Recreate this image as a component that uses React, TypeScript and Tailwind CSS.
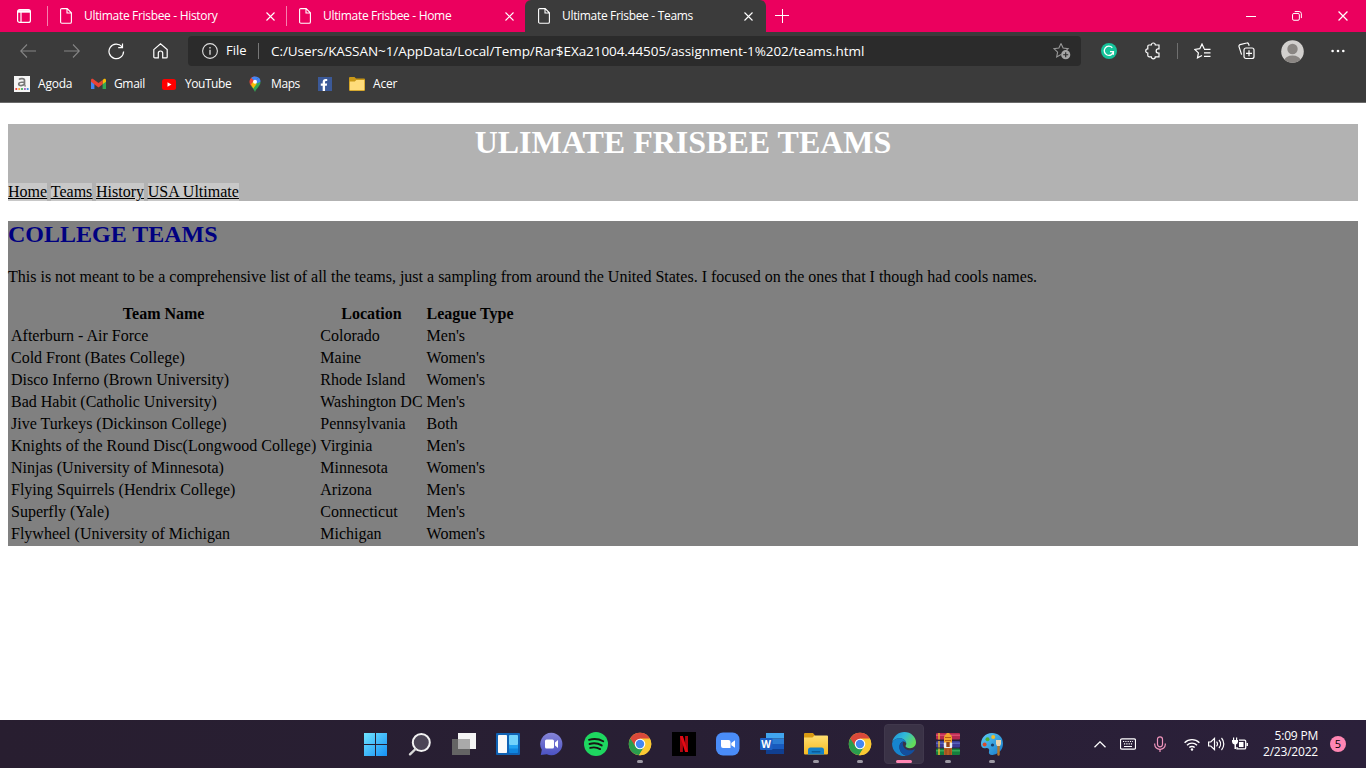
import type { ReactNode } from "react";
import { FaFacebookF } from "react-icons/fa";

const teams = [
  ["Afterburn - Air Force", "Colorado", "Men's"],
  ["Cold Front (Bates College)", "Maine", "Women's"],
  ["Disco Inferno (Brown University)", "Rhode Island", "Women's"],
  ["Bad Habit (Catholic University)", "Washington DC", "Men's"],
  ["Jive Turkeys (Dickinson College)", "Pennsylvania", "Both"],
  ["Knights of the Round Disc(Longwood College)", "Virginia", "Men's"],
  ["Ninjas (University of Minnesota)", "Minnesota", "Women's"],
  ["Flying Squirrels (Hendrix College)", "Arizona", "Men's"],
  ["Superfly (Yale)", "Connecticut", "Men's"],
  ["Flywheel (University of Michigan", "Michigan", "Women's"],
];

function CloseX({ size = 9 }: { size?: number }) {
  return (
    <svg width={size} height={size} viewBox="0 0 9 9" stroke="white" strokeWidth="1.1" className="shrink-0">
      <path d="M.5 .5l8 8M8.5 .5l-8 8" />
    </svg>
  );
}

function PageIcon() {
  return (
    <svg width="12" height="16" viewBox="0 0 12 16" fill="none" stroke="white" strokeWidth="1.1" className="shrink-0">
      <path d="M2 .6h5.2l4.2 4.2V14a1.3 1.3 0 0 1-1.3 1.3H2A1.3 1.3 0 0 1 .6 14V2A1.3 1.3 0 0 1 2 .6zM7 .8V5h4.2" />
    </svg>
  );
}

function Tab({ title, active }: { title: string; active?: boolean }) {
  return (
    <div
      className={
        active
          ? "flex h-8 w-[241px] items-center rounded-t-md bg-[#3b3b3b] pl-[13px] pr-[13px]"
          : "flex h-8 w-[238px] items-center pl-[12px] pr-[11px]"
      }
    >
      <PageIcon />
      <span className="ml-3 flex-1 whitespace-nowrap text-[12px] leading-4 tracking-[-0.32px] text-white">{title}</span>
      <CloseX />
    </div>
  );
}

function TabStrip() {
  return (
    <div className="flex h-8 items-center bg-[#eb005e]">
      <div className="flex w-[47px] justify-center">
        <svg width="14" height="14" viewBox="0 0 14 14" fill="none" stroke="white" strokeWidth="1.2">
          <rect x=".6" y=".6" width="12.8" height="12.8" rx="2" />
          <path d="M1 2.4h12" strokeWidth="2.6" />
          <path d="M4 3v10.4" />
        </svg>
      </div>
      <div className="h-5 w-px bg-[#f77fae]" />
      <Tab title="Ultimate Frisbee - History" />
      <div className="h-5 w-px bg-[#f77fae]" />
      <Tab title="Ultimate Frisbee - Home" />
      <Tab title="Ultimate Frisbee - Teams" active />
      <svg width="14" height="14" viewBox="0 0 14 14" stroke="white" strokeWidth="1" className="ml-[9px]">
        <path d="M0 6.5h14M7.5 0v14" />
      </svg>
      <div className="flex-1" />
      <div className="flex w-[46px] justify-center">
        <svg width="10" height="10" viewBox="0 0 10 10" stroke="white"><path d="M0 5.5h10" /></svg>
      </div>
      <div className="flex w-[46px] justify-center">
        <svg width="10" height="10" viewBox="0 0 11 11" fill="none" stroke="white" strokeWidth="1.1">
          <rect x=".6" y="2.700" width="7.5" height="7.5" rx="1.5" />
          <path d="M3 .6h4.8A2.5 2.5 0 0 1 10.3 3v4.8" />
        </svg>
      </div>
      <div className="flex w-[46px] justify-center"><CloseX size={10} /></div>
    </div>
  );
}

function Toolbar() {
  return (
    <div className="flex h-[38px] items-center bg-[#3b3b3b]">
      <svg width="16" height="14" viewBox="0 0 16 14" fill="none" stroke="#858585" strokeWidth="1.1" className="ml-5">
        <path d="M16 7H.8M7 .5L.7 7 7 13.500" />
      </svg>
      <svg width="16" height="14" viewBox="0 0 16 14" fill="none" stroke="#858585" strokeWidth="1.1" className="ml-7">
        <path d="M0 7h15.200M9 .5L15.300 7 9 13.500" />
      </svg>
      <svg width="17" height="17" viewBox="0 0 17 17" fill="none" stroke="white" strokeWidth="1.2" className="ml-[28px]">
        <path d="M15.600 8.500A7.300 7.300 0 1 1 13.900 3.700M14.500 .4v4.300h-4.300" />
      </svg>
      <svg width="15" height="16" viewBox="0 0 15 16" fill="none" stroke="white" strokeWidth="1.200" className="ml-[28px]">
        <path d="M.8 6.600L7.500 .8l6.700 5.800v7.300a1 1 0 0 1-1 1H9.700v-4.700a2.200 2.200 0 0 0-4.400 0v4.700H1.800a1 1 0 0 1-1-1z" />
      </svg>
      <div className="ml-5 flex h-[30px] w-[893px] items-center rounded-[4px] bg-[#2b2b2b] pl-[14px] text-[14px] text-white">
        <svg width="16" height="16" viewBox="0 0 16 16" fill="none" stroke="#e0e0e0" strokeWidth="1.1">
          <circle cx="8" cy="8" r="7.400" />
          <path d="M8 6.800v5M8 4v1.500" strokeWidth="1.300" />
        </svg>
        <span className="ml-2 w-[22px] text-[13px]">File</span>
        <div className="ml-[10px] h-4 w-px bg-[#777]" />
        <span className="ml-3 flex-1 whitespace-nowrap text-[13.500px] tracking-[-0.07px]">
          C:/Users/KASSAN~1/AppData/Local/Temp/Rar$EXa21004.44505/assignment-1%202/teams.html
        </span>
        <svg width="18" height="18" viewBox="0 0 18 18" fill="none" stroke="#999" strokeWidth="1.100" className="mr-[10px]">
          <path d="M8 1.500l2.100 4.500 5 .6-2.300 2.200M8 1.500L5.900 6l-5 .6 3.700 3.500-.9 4.900L8 12.600" />
          <circle cx="12.700" cy="12.700" r="4.600" fill="#a6a6a6" stroke="none" />
          <path d="M12.700 10.200v5M10.200 12.700h5" stroke="#2b2b2b" />
        </svg>
      </div>
      <svg width="16" height="16" viewBox="0 0 16 16" className="ml-5">
        <circle cx="8" cy="8" r="8" fill="#15c39a" />
        <path d="M11.300 4.700A4.600 4.600 0 1 0 12.400 8.700H9M12.400 8.700v3" fill="none" stroke="white" strokeWidth="1.300" />
      </svg>
      <svg width="16" height="18" viewBox="0 0 16 18" fill="none" stroke="white" strokeWidth="1.200" className="ml-[28px]">
        <path d="M4 3h2.300a2 2 0 0 1 4 0H14v3.900h-.8a2 2 0 0 0 0 4.100h.8v3.800h-3.700a2 2 0 0 1-4 0H4a1.200 1.200 0 0 1-1.200-1.200V11a2 2 0 0 1 0-4.100V4.200A1.200 1.200 0 0 1 4 3z" />
      </svg>
      <div className="ml-4 h-4 w-px bg-[#6f6f6f]" />
      <svg width="17" height="17" viewBox="0 0 17 17" fill="none" stroke="white" strokeWidth="1.200" className="ml-4">
        <path d="M10.200 5.800L8 1 5.800 5.700l-5 .7 3.600 3.500-.9 5L8 12.500M10 6.300h6.500M10 9.800h6.500M10 13.300h6.500" />
      </svg>
      <svg width="17" height="18" viewBox="0 0 17 18" fill="none" stroke="white" strokeWidth="1.200" className="ml-[27px]">
        <rect x="6" y="6" width="10" height="10.500" rx="2" />
        <path d="M11 8.300v6M8 11.300h6M3.600 12.600L1 4.600a1.500 1.500 0 0 1 1-1.900L8.700 1a1.500 1.500 0 0 1 1.900 1l.6 1.800" />
      </svg>
      <svg width="23" height="23" viewBox="0 0 23 23" className="ml-[26px]">
        <clipPath id="avatar"><circle cx="11.500" cy="11.500" r="11.300" /></clipPath>
        <g clipPath="url(#avatar)">
          <rect width="23" height="23" fill="#d2d0ce" />
          <circle cx="11.500" cy="9" r="5.200" fill="#8a8683" />
          <ellipse cx="11.500" cy="20.500" rx="8" ry="5" fill="#8a8683" />
        </g>
      </svg>
      <svg width="14" height="4" viewBox="0 0 14 4" fill="white" className="ml-[27px]">
        <circle cx="1.600" cy="2" r="1.300" /><circle cx="7" cy="2" r="1.300" /><circle cx="12.300" cy="2" r="1.300" />
      </svg>
    </div>
  );
}

function Bookmarks() {
  return (
    <div className="flex h-[33px] items-start border-b border-[#6a6a6a] bg-[#3b3b3b] pt-[6px] text-[12px] leading-4 tracking-[-0.2px] text-white">
      <div className="flex h-4 items-center">
        <svg width="16" height="16" viewBox="0 0 16 16" className="ml-[14px]">
          <rect width="16" height="16" fill="#f5f5f5" />
          <path d="M5 3.500c1-1 5.500-1.500 5.500 1v5M10.500 6C7 6 4.700 6.300 4.700 8c0 2.200 4.800 2.200 5.800-.5M10.500 9.800h1.200" fill="none" stroke="#777" strokeWidth="1.700" />
          <circle cx="2.300" cy="13" r="1.100" fill="#e33" /><circle cx="5.200" cy="13" r="1.100" fill="#fa3" /><circle cx="8" cy="13" r="1.100" fill="#3a5" /><circle cx="10.900" cy="13" r="1.100" fill="#95b" /><circle cx="13.700" cy="13" r="1.100" fill="#38d" />
        </svg>
        <span className="ml-2 w-[45px]">Agoda</span>
        <svg width="15" height="12" viewBox="0 0 15 12" className="ml-2">
          <path d="M0 2v9h3.400V3z" fill="#4285f4" /><path d="M15 2v9h-3.400V3z" fill="#34a853" />
          <path d="M11.600 2l1-.8C13.500 .4 15 1 15 2.200v1.500l-3.400 2.600z" fill="#fbbc04" />
          <path d="M0 2.200C0 1 1.500 .4 2.400 1.200l5.100 3.900 4.100-3.100v4.300L7.500 9.400 0 3.700z" fill="#ea4335" />
        </svg>
        <span className="ml-2 w-[40px] tracking-[-0.35px]">Gmail</span>
        <svg width="14" height="11" viewBox="0 0 14 11" className="ml-2">
          <rect width="14" height="11" rx="2.500" fill="#f00" /><path d="M5.500 3.200v4.600l4-2.300z" fill="white" />
        </svg>
        <span className="ml-[9px] w-[54px] tracking-[-0.45px]">YouTube</span>
        <svg width="12" height="16" viewBox="0 0 12 16" className="ml-[10px]">
          <path d="M6 16C5 13 1 10 .8 6.500L4 3l7.500 3C11.500 10 7.500 12 6 16z" fill="#34a853" />
          <path d="M.6 6.500C.6 3 2.500 .5 6 .5L9 4 3.500 11C2 9.500 .6 8.500 .6 6.500z" fill="#ea4335" />
          <path d="M2.300 8.300L9.500 1.500C8.500 .8 7.300 .4 6 .4 4 .4 2.600 1.200 1.800 2.300L4.500 4.600z" fill="#4285f4" />
          <path d="M.9 4.200L2.300 2l3 2.700L2 8.300C.8 7 .6 5.500 .9 4.200z" fill="#ea4335" />
          <path d="M2 8.300l2.600-3 3.200 2.500L4.300 12.500C3.300 11 2.600 9.700 2 8.300z" fill="#fbbc04" />
          <path d="M9.500 1.500c1.500 1 2 2.600 2 4.300L8 7.500 5.500 4.700z" fill="#4285f4" />
          <circle cx="6" cy="5.800" r="2" fill="white" />
        </svg>
        <span className="ml-[10px] w-[38px] tracking-[-0.4px]">Maps</span>
        <div className="ml-[9px] flex h-[14px] w-[14px] items-end justify-end bg-[#3b5998] pr-[2px]">
          <FaFacebookF size={12} color="white" />
        </div>
        <svg width="16" height="14" viewBox="0 0 16 14" className="ml-[17px]">
          <path d="M0 1a1 1 0 0 1 1-1h4.500L7 1.500h8a1 1 0 0 1 1 1V13a1 1 0 0 1-1 1H1a1 1 0 0 1-1-1z" fill="#c99817" />
          <path d="M.8 4.500h5L7.300 3h8v10.200H.8z" fill="#ffdc7b" />
        </svg>
        <span className="ml-2">Acer</span>
      </div>
    </div>
  );
}

function WebPage() {
  return (
    <div className="h-[617px] bg-white px-2 pt-[21px] font-['Liberation_Serif',serif] text-[16px] leading-[18px] text-black">
      <header className="h-[77px] bg-[#b2b2b2]">
        <h1 className="mb-[22px] text-center text-[32px] font-bold leading-[37px] text-white">ULIMATE FRISBEE TEAMS</h1>
        <nav className="flex gap-[3.700px] underline">
          {["Home", "Teams", "History", "USA Ultimate"].map((t) => (
            <a key={t} className="bg-[#c8c8c8]">{t}</a>
          ))}
        </nav>
      </header>
      <main className="mt-5 h-[325px] bg-[#808080]">
        <h2 className="text-[24px] font-bold leading-[27px] text-[#000080]">COLLEGE TEAMS</h2>
        <p className="mb-4 mt-5">
          This is not meant to be a comprehensive list of all the teams, just a sampling from around the United States. I focused on the ones that I though had cools names.
        </p>
        <table className="border-separate border-spacing-[2px] whitespace-nowrap">
          <thead>
            <tr>
              {["Team Name", "Location", "League Type"].map((h) => (
                <th key={h} className="p-px text-center font-bold">{h}</th>
              ))}
            </tr>
          </thead>
          <tbody>
            {teams.map((row) => (
              <tr key={row[0]}>
                {row.map((cell, i) => <td key={i} className="p-px">{cell}</td>)}
              </tr>
            ))}
          </tbody>
        </table>
      </main>
    </div>
  );
}

function Chrome() {
  return (
    <g>
      <circle cx="12" cy="12" r="11.200" fill="#fbc934" />
      <path d="M2.300 6.400A11.200 11.200 0 0 0 11 23.200L16.200 14.500 12 12z" fill="#2a9d4e" />
      <path d="M12 6.400h9.700A11.200 11.200 0 0 1 11 23.200l6-9z" fill="#fbc934" />
      <path d="M2.300 6.400A11.200 11.200 0 0 1 21.700 6.400H12L7.500 14.500z" fill="#d9493a" />
      <circle cx="12" cy="12" r="5.300" fill="white" />
      <circle cx="12" cy="12" r="4.200" fill="#4587f3" />
    </g>
  );
}

const apps: { id: string; art: ReactNode; state?: "open" | "active" }[] = [
  {
    id: "start",
    art: (
      <g fill="url(#win)">
        <path d="M0 1h11v11H0zM12 1h11v11H12zM0 13h11v11H0zM12 13h11v11H12z" />
      </g>
    ),
  },
  {
    id: "search",
    art: (
      <g>
        <circle cx="13.300" cy="10.500" r="8.500" fill="#4c4556" stroke="#f2f2f2" strokeWidth="2" />
        <path d="M7.500 17L2 22.300" stroke="#d8d8d8" strokeWidth="2.400" strokeLinecap="round" />
      </g>
    ),
  },
  {
    id: "taskview",
    art: (
      <g>
        <rect x="6" y="1" width="18" height="16" fill="#f4f4f4" />
        <rect y="7" width="18" height="16" fill="#646464" />
        <rect x="6" y="7" width="12" height="10" fill="#a9a9a9" />
      </g>
    ),
  },
  {
    id: "widgets",
    art: (
      <g>
        <rect y="1" width="24" height="22" rx="1" fill="#0f62b4" />
        <rect x="2" y="3" width="9" height="18" rx=".8" fill="#fafafa" />
        <rect x="13" y="3" width="9" height="10" rx=".8" fill="#72d2fb" />
        <rect x="13" y="13" width="9" height="8" rx=".8" fill="#0f86df" />
        <rect x="13" y="13" width="9" height="3.500" fill="#21a1f1" />
      </g>
    ),
  },
  {
    id: "chat",
    art: (
      <g>
        <path d="M11.500 .8A11.200 11.200 0 1 1 6.800 22.300L.8 23l1-5.300A11.200 11.200 0 0 1 11.500 .8z" fill="url(#chat)" />
        <rect x="5" y="7.500" width="9" height="9" rx="1.500" fill="white" />
        <path d="M15 10.500l3-2.500v8L15 13.500z" fill="white" />
      </g>
    ),
  },
  {
    id: "spotify",
    art: (
      <g>
        <circle cx="12" cy="12" r="12" fill="#1ed760" />
        <path d="M5 7.800c5-1.400 10-.9 14.200 1.500M5.500 12c4.200-1.200 8.500-.8 12.200 1.400M6.200 15.900c3.500-.9 6.800-.6 9.900 1.200" fill="none" stroke="#191414" strokeWidth="1.900" strokeLinecap="round" />
      </g>
    ),
  },
  { id: "chrome", art: <Chrome />, state: "open" },
  {
    id: "netflix",
    art: (
      <g>
        <rect width="24" height="24" fill="black" />
        <rect x="8" y="4" width="2.900" height="16" fill="#b20710" />
        <rect x="13.100" y="4" width="2.900" height="16" fill="#b20710" />
        <path d="M8 4h2.900L16 20h-2.900z" fill="#e50914" />
      </g>
    ),
  },
  {
    id: "zoom",
    art: (
      <g>
        <rect y=".5" width="23.500" height="23" rx="7" fill="#4a8cf7" />
        <path d="M5 8h7.500a2 2 0 0 1 2 2v6H7a2 2 0 0 1-2-2zM15.300 11l3.700-2.700v7.500L15.300 13.200z" fill="white" />
      </g>
    ),
  },
  {
    id: "word",
    art: (
      <g>
        <rect x="6" y="1" width="18" height="5.500" fill="#41a5ee" />
        <rect x="6" y="6.500" width="18" height="5.500" fill="#2b7cd3" />
        <rect x="6" y="12" width="18" height="5" fill="#185abd" />
        <rect x="6" y="17" width="18" height="5" fill="#103f91" />
        <rect y="6" width="12.500" height="12" rx="1" fill="#1c5fc4" />
        <text x="6.200" y="15.600" textAnchor="middle" fontSize="10" fontWeight="700" fill="white">W</text>
      </g>
    ),
  },
  {
    id: "files",
    state: "open",
    art: (
      <g>
        <path d="M0 2a1 1 0 0 1 1-1h8l2 2.500V8H0z" fill="#d99a12" />
        <path d="M0 5.500h8.500L10.500 3.500H23a1 1 0 0 1 1 1V21.500a1 1 0 0 1-1 1H1a1 1 0 0 1-1-1z" fill="url(#folder)" />
        <path d="M4 22.500V18a2.500 2.500 0 0 1 2.500-2.500h11A2.500 2.500 0 0 1 20 18v4.500z" fill="#1480c8" />
        <rect x="7.500" y="19" width="9" height="1.600" rx=".8" fill="#0b5a98" />
      </g>
    ),
  },
  { id: "chrome2", art: <Chrome />, state: "open" },
  {
    id: "edge",
    state: "active",
    art: (
      <g>
        <path d="M.2 10C1.500 4 6.500 0 12.300 0 19 0 24 5 24 10.300c0 3.500-2.600 5.900-6 5.900-2.700 0-4.500-1-4.500-2.100 0-.6.800-.9.800-2.300C14.300 9 11.500 6.300 7.800 6.300 4.500 6.300 1.800 7.700 .2 10z" fill="url(#edgeTop)" />
        <path d="M.1 11.300C.7 8.300 4 6.300 7.800 6.300c3.700 0 6.500 2.700 6.500 5.200-.4-1-1.400-1.900-2.800-1.900-2.200 0-4.200 2.600-4 5.800.3 4.200 3.200 7.600 7.200 8.300A12 12 0 0 1 .1 11.300z" fill="#1685cf" />
        <path d="M11.500 9.600c-3 .5-5 4-4 7.500 1 3.500 3.700 6.100 7.200 6.600 3.300-.7 6.300-2.700 8-5.700.3-.5-.1-.9-.6-.6-3.300 1.500-7 1-9.200-1-2.200-2-2.700-4.900-1.400-6.800z" fill="#124f9f" />
      </g>
    ),
  },
  {
    id: "winrar",
    state: "open",
    art: (
      <g>
        <rect y="1" width="24" height="6.500" rx="1" fill="#b6284f" />
        <rect y="2.500" width="24" height="1.500" fill="#d94d70" />
        <rect y="9" width="24" height="6.500" rx="1" fill="#3b3b95" />
        <rect y="10.500" width="24" height="1.500" fill="#5962b9" />
        <rect y="16.500" width="24" height="6.500" rx="1" fill="#157f3d" />
        <rect y="18" width="24" height="1.500" fill="#35a858" />
        <path d="M3 1v6.500M3 9v6.500M3 16.500V23" stroke="#e6b531" strokeWidth="1.500" />
        <rect x="8" y="15" width="8" height="8" fill="#b45e24" />
        <path d="M8 11V5.500A4 4 0 0 1 10.500 2V1h3v1A4 4 0 0 1 16 5.500V11z" fill="#f3a52d" />
        <path d="M9 5.500h6M9 8.500h6" stroke="#b65b15" />
        <rect x="7.800" y="10.500" width="8.400" height="5.500" rx="1" fill="#efefef" />
        <rect x="10.300" y="10" width="3.400" height="5" fill="#94451b" />
        <path d="M10 17v6M14 17v6" stroke="#894019" strokeWidth=".8" />
      </g>
    ),
  },
  {
    id: "paint",
    state: "open",
    art: (
      <g>
        <path d="M12 1C5 1 1 6.500 1 12c0 3.500 2 4.600 4.500 4.200 3-.5 4.200 1 3.500 3.300-.8 2.500 1.500 4 4.500 3.300C19.500 21.500 23 17 23 11.500 23 5 18 1 12 1z" fill="url(#palette)" />
        <circle cx="12.500" cy="13" r="1.600" fill="#1c3e66" />
        <circle cx="4.600" cy="12.500" r="2" fill="#d84a2b" />
        <circle cx="7.500" cy="7.300" r="2" fill="#4faf31" />
        <circle cx="13.200" cy="5" r="2" fill="#f4bd28" />
        <path d="M18.500 14v8.500" stroke="#b2752a" strokeWidth="2.400" strokeLinecap="round" />
        <path d="M16 8h5v4l-1 2h-3l-1-2z" fill="#ead5b0" />
      </g>
    ),
  },
];

function Taskbar() {
  return (
    <div className="flex h-12 items-center bg-linear-to-r from-[#281e30] via-[#281f34] to-[#2b203a] pl-[354px] text-[12px] text-white">
      <svg width="0" height="0" className="absolute">
        <defs>
          <linearGradient id="win" x1="0" y1="0" x2="1" y2="1"><stop stopColor="#6fe4ff" /><stop offset="1" stopColor="#1590f5" /></linearGradient>
          <linearGradient id="chat" x1="0" y1="0" x2="0" y2="1"><stop stopColor="#8584d6" /><stop offset="1" stopColor="#4b52c4" /></linearGradient>
          <linearGradient id="folder" x1="0" y1="0" x2="0" y2="1"><stop stopColor="#ffdf70" /><stop offset="1" stopColor="#f5b921" /></linearGradient>
          <linearGradient id="edgeTop" x1="0" y1="0" x2="1" y2=".5"><stop stopColor="#1b8fdd" /><stop offset=".5" stopColor="#31b9d8" /><stop offset="1" stopColor="#63dc5a" /></linearGradient>
          <linearGradient id="palette" x1="0" y1="0" x2="1" y2="1"><stop stopColor="#5ccdf5" /><stop offset="1" stopColor="#1879c9" /></linearGradient>
        </defs>
      </svg>
      {apps.map(({ id, art, state }) => (
        <div key={id} className="flex w-11 justify-center">
          <div
            className={
              state === "active"
                ? "relative flex h-10 w-10 items-center justify-center rounded-[4px] border border-[#40384c] bg-[#3a3246]"
                : "relative flex h-10 w-10 items-center justify-center"
            }
          >
            <svg width="24" height="24" viewBox="0 0 24 24">{art}</svg>
            {state === "open" && <div className="absolute bottom-[1px] left-[17px] h-[3px] w-[6px] rounded-full bg-[#9c98a3]" />}
            {state === "active" && <div className="absolute bottom-0 left-[11px] h-[3px] w-4 rounded-full bg-[#ff86b3]" />}
          </div>
        </div>
      ))}
      <svg width="12" height="7" viewBox="0 0 12 7" fill="none" stroke="white" strokeWidth="1.300" className="ml-[80px]"><path d="M.5 6.300L6 .9l5.500 5.400" /></svg>
      <svg width="16" height="12" viewBox="0 0 16 12" fill="none" stroke="white" className="ml-[14px]">
        <rect x=".5" y=".8" width="15" height="10.400" rx="1.500" strokeWidth="1.200" />
        <path d="M3 3.500h10M4 5.800h9" strokeDasharray="1.200 1.100" strokeWidth="1.200" /><path d="M4 8.500h8" />
      </svg>
      <svg width="12" height="17" viewBox="0 0 12 17" fill="none" stroke="#f095bd" strokeWidth="1.200" className="ml-[18px]">
        <rect x="3.500" y=".8" width="5" height="10" rx="2.500" /><path d="M.7 7.500v1A5 5 0 0 0 6 13.300 5 5 0 0 0 11.300 8.500v-1M6 13.300V16" />
      </svg>
      <svg width="16" height="13" viewBox="0 0 16 13" fill="none" stroke="white" strokeWidth="1.400" className="ml-[18px]">
        <path d="M.6 4.700a10.500 10.500 0 0 1 14.800 0M3 7.200a7 7 0 0 1 10 0M5.300 9.600a3.800 3.800 0 0 1 5.400 0" />
        <circle cx="8" cy="11.500" r="1.200" fill="white" stroke="none" />
      </svg>
      <svg width="17" height="14" viewBox="0 0 17 14" fill="none" stroke="white" strokeWidth="1.200" className="ml-2">
        <path d="M.6 5h2.200l3.700-3.600v11.200L2.800 9H.6zM8.500 4.700a3.500 3.500 0 0 1 0 4.600M11 3a6 6 0 0 1 0 8M13.500 1a9 9 0 0 1 0 12" />
      </svg>
      <svg width="17" height="14" viewBox="0 0 17 14" fill="none" stroke="white" strokeWidth="1.300" className="ml-[7px]">
        <path d="M7 3.100h5.500a1.200 1.200 0 0 1 1.200 1.200v6.400a1.200 1.200 0 0 1-1.200 1.200H5V10M15.300 6v3" />
        <rect x="7" y="5" width="4.500" height="5" fill="white" stroke="none" />
        <path d="M0 3h6v2a3 3 0 0 1-2 2.500V12H2.500V7.500A3 3 0 0 1 0 5V3M1 3V.5h1.200V3M4 3V.5h1.200V3" fill="white" stroke="none" />
      </svg>
      <div className="ml-[11px] w-[58px] whitespace-nowrap text-right leading-4 tracking-[-0.2px]">
        <div>5:09 PM</div>
        <div>2/23/2022</div>
      </div>
      <div className="ml-3 flex h-4 w-4 items-center justify-center rounded-full bg-[#ff86b3] text-[11px] text-black">5</div>
    </div>
  );
}

export default function App() {
  return (
    <div className="flex h-[768px] w-[1366px] flex-col overflow-hidden font-['Open_Sans','Noto_Sans',sans-serif]">
      <TabStrip />
      <Toolbar />
      <Bookmarks />
      <WebPage />
      <Taskbar />
    </div>
  );
}
